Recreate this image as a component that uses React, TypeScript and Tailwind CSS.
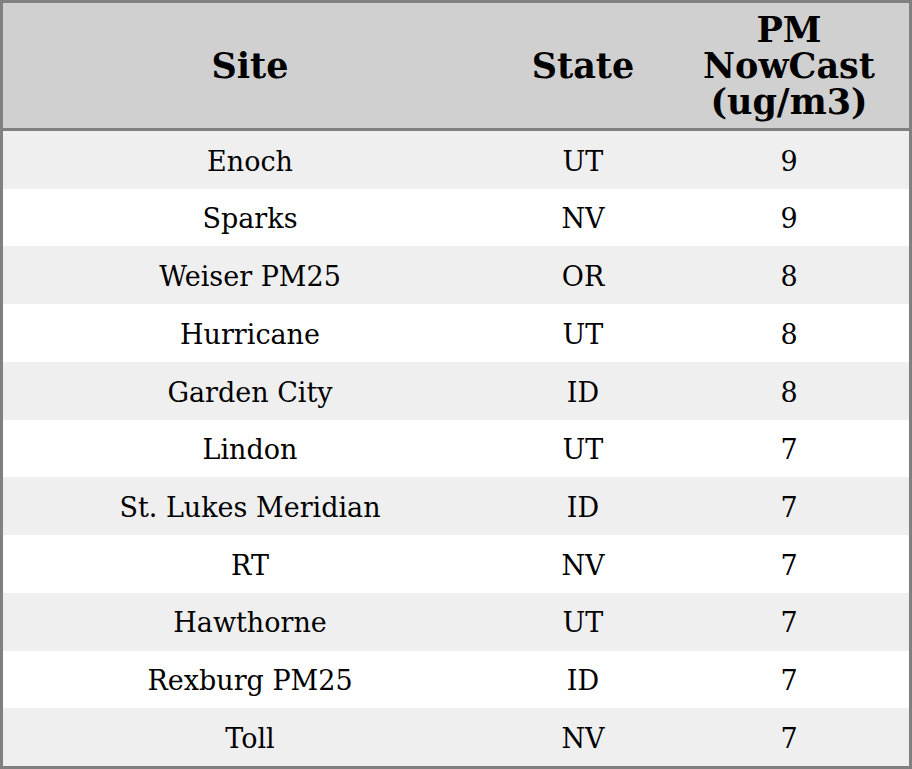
const rows: [string, string, number][] = [
  ["Enoch", "UT", 9],
  ["Sparks", "NV", 9],
  ["Weiser PM25", "OR", 8],
  ["Hurricane", "UT", 8],
  ["Garden City", "ID", 8],
  ["Lindon", "UT", 7],
  ["St. Lukes Meridian", "ID", 7],
  ["RT", "NV", 7],
  ["Hawthorne", "UT", 7],
  ["Rexburg PM25", "ID", 7],
  ["Toll", "NV", 7],
]

export default function App() {
  return (
    <div className="w-[912px] h-[769px] bg-white font-['DejaVu_Serif',serif] text-black">
      <div className="flex h-full flex-col border-[3px] border-[#808080]">
        <div className="flex h-[128px] shrink-0 items-center border-b-[3px] border-[#808080] bg-[#d0d0d0] text-[35px] font-bold leading-[36px]">
          <div className="w-[494px] text-center">Site</div>
          <div className="w-[172px] text-center">State</div>
          <div className="flex-1 text-center">
            PM
            <br />
            NowCast
            <br />
            (ug/m3)
          </div>
        </div>
        <div className="flex flex-1 flex-col">
          {rows.map(([site, state, value], i) => (
            <div
              key={site}
              className={`flex flex-1 items-center pt-1 text-[27px] ${i % 2 === 0 ? "bg-[#efefef]" : "bg-white"}`}
            >
              <div className="w-[494px] text-center">{site}</div>
              <div className="w-[172px] text-center">{state}</div>
              <div className="flex-1 text-center">{value}</div>
            </div>
          ))}
        </div>
      </div>
    </div>
  )
}
